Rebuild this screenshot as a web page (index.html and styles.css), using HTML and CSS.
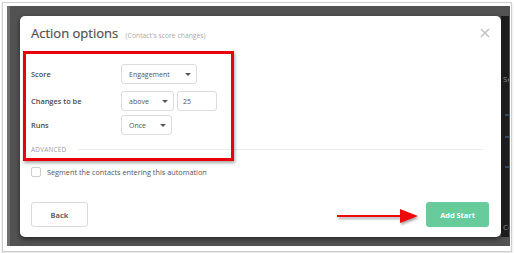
FILE: index.html
```html
<!DOCTYPE html>
<html lang="en">
<head>
    <meta charset="UTF-8">
    <meta name="viewport" content="width=device-width, initial-scale=1.0">
    <title>Action options</title>
    <link rel="stylesheet" href="styles.css">
</head>
<body>
    <div class="shot">
        <div class="overlay">
            <div class="modal">
                <div class="modal-header">
                    <h2>Action options <span class="subtitle">(Contact's score changes)</span></h2>
                    <svg class="close" width="10" height="10" viewBox="0 0 10 10">
                        <path d="M1 1 L9 9 M9 1 L1 9" stroke="#c4c4c4" stroke-width="1.6" fill="none"/>
                    </svg>
                </div>

                <div class="modal-body">
                    <div class="field-row">
                        <label>Score</label>
                        <div class="select select-score"><span>Engagement</span><i class="caret"></i></div>
                    </div>
                    <div class="field-row row-changes">
                        <label>Changes to be</label>
                        <div class="select select-above"><span>above</span><i class="caret"></i></div>
                        <div class="input-box">25</div>
                    </div>
                    <div class="field-row row-runs">
                        <label>Runs</label>
                        <div class="select select-runs"><span>Once</span><i class="caret"></i></div>
                    </div>
                    <div class="advanced">
                        <span>ADVANCED</span>
                        <div class="rule"></div>
                    </div>
                    <div class="check-row">
                        <span class="checkbox"></span>
                        <span>Segment the contacts entering this automation</span>
                    </div>
                </div>

                <div class="modal-footer">
                    <button class="btn btn-back">Back</button>
                    <button class="btn btn-start">Add Start</button>
                </div>

                <!-- annotations drawn over the screenshot -->
                <div class="red-box"></div>
                <svg class="arrow" width="84" height="18" viewBox="0 0 84 18">
                    <line x1="1" y1="8" x2="66" y2="8" stroke="#ee0a0a" stroke-width="2"/>
                    <polygon points="64,1 82,8 64,15" fill="#ee0a0a"/>
                </svg>
            </div>
            <div class="behind">
                <div class="behind-line top">Se</div>
                <div class="behind-line blue a"></div>
                <div class="behind-line blue b"></div>
                <div class="behind-line blue c"></div>
                <div class="behind-line bottom">Co</div>
            </div>
        </div>
    </div>
</body>
</html>
```

FILE: styles.css
```css
body {
    margin: 0;
    background: #fff;
    font-family: "Open Sans", Arial, sans-serif;
}
.shot {
    margin: 2px;
    width: 503px;
    height: 242px;
    padding: 3px 1px 3px 4px;
    border: 1px solid #cdcdcd;
    box-shadow: 0 1px 2px rgba(0, 0, 0, 0.15);
}
.overlay {
    display: flex;
    height: 221px;
    padding: 10px 0 9px 13px;
    background: linear-gradient(to right, #6e6e6e 0, #6e6e6e 3px, #525252 3px);
}
.modal {
    position: relative;
    width: 481px;
    height: 221px;
    background: #fff;
    border-radius: 5px;
    box-shadow: 0 2px 5px rgba(0, 0, 0, 0.55);
    display: flex;
    flex-direction: column;
}
.behind {
    position: relative;
    width: 8px;
    background: #1c1c1c;
    overflow: hidden;
}
.behind-line {
    font-size: 8px;
    color: #8a8a8a;
    height: 10px;
    line-height: 10px;
    padding-left: 2px;
    white-space: nowrap;
}
.behind-line.top {
    margin-top: 58px;
}
.behind-line.blue {
    height: 2px;
    width: 4px;
    margin: 0 0 0 4px;
    background: #2a4b66;
}
.behind-line.a { margin-top: 30px; }
.behind-line.b { margin-top: 20px; }
.behind-line.c { margin-top: 28px; }
.behind-line.bottom {
    margin-top: 54px;
}

.modal-header {
    display: flex;
    justify-content: space-between;
    align-items: flex-start;
    padding: 8px 11px 0 11px;
}
.modal-header h2 {
    margin: 0;
    font-size: 13px;
    line-height: 18px;
    font-weight: 400;
    color: #505050;
    -webkit-text-stroke: 0.2px #505050;
}
.subtitle {
    margin-left: 4px;
    font-size: 6.8px;
    color: #aaa;
    -webkit-text-stroke: 0;
}
.close {
    margin-top: 4px;
}

.modal-body {
    padding: 19px 11px 0 11px;
    flex: 1;
}
.field-row {
    display: flex;
    align-items: center;
    height: 20px;
}
.row-changes {
    margin-top: 7px;
}
.row-runs {
    margin-top: 4px;
}
.field-row label {
    width: 90px;
    font-size: 7.4px;
    font-weight: 600;
    color: #4a4a4a;
}
.select,
.input-box {
    box-sizing: border-box;
    height: 20px;
    border: 1px solid #dcdcdc;
    border-radius: 3px;
    display: flex;
    align-items: center;
    justify-content: space-between;
    font-size: 7px;
    color: #555;
}
.select {
    padding: 0 5px 0 7px;
}
.select-score { width: 76px; }
.select-above { width: 53px; }
.select-runs { width: 51px; }
.input-box {
    width: 40px;
    margin-left: 3px;
    padding-left: 5px;
}
.caret {
    width: 0;
    height: 0;
    border-left: 3px solid transparent;
    border-right: 3px solid transparent;
    border-top: 3px solid #555;
}
.advanced {
    display: flex;
    align-items: center;
    margin-top: 9px;
    height: 10px;
    font-size: 6.3px;
    letter-spacing: 0.3px;
    color: #9a9a9a;
}
.advanced .rule {
    flex: 1;
    height: 1px;
    margin-left: 12px;
    margin-right: 7px;
    background: #ececec;
}
.check-row {
    display: flex;
    align-items: center;
    margin-top: 13px;
    font-size: 7.3px;
    color: #555;
}
.checkbox {
    box-sizing: border-box;
    width: 10px;
    height: 10px;
    margin-right: 6px;
    border: 1px solid #cfcfcf;
    border-radius: 2px;
}

.modal-footer {
    display: flex;
    justify-content: space-between;
    padding: 0 12px 10px 11px;
}
.btn {
    height: 25px;
    border-radius: 3px;
    font-family: "Open Sans", Arial, sans-serif;
    font-size: 7.4px;
    font-weight: 700;
    padding: 0;
}
.btn-back {
    width: 57px;
    background: #fff;
    border: 1px solid #dadada;
    color: #666;
}
.btn-start {
    width: 63px;
    background: #68cb9c;
    border: none;
    color: #fff;
}

.red-box {
    position: absolute;
    left: 3px;
    top: 35px;
    width: 205px;
    height: 104px;
    border: 3px solid #e8020b;
    box-shadow: 1px 2px 3px rgba(0, 0, 0, 0.35);
}
.arrow {
    position: absolute;
    left: 316px;
    top: 192px;
    filter: drop-shadow(1px 2px 1px rgba(0, 0, 0, 0.35));
}
```
